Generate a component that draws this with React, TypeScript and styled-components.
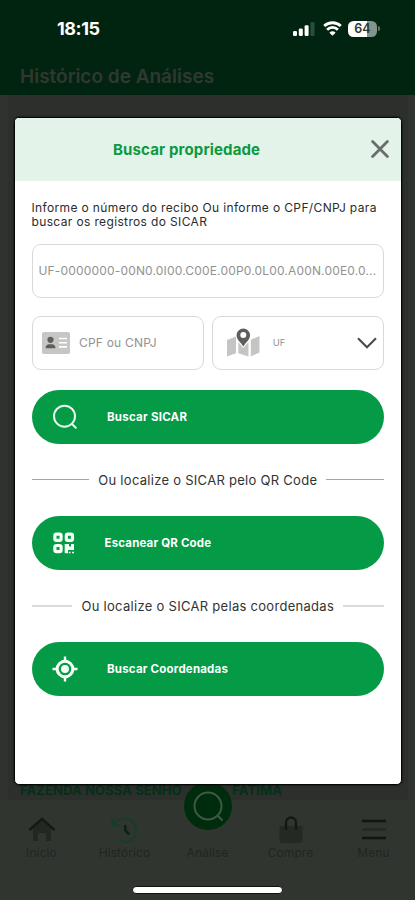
import React from "react";
import styled, { createGlobalStyle } from "styled-components";

const GlobalStyle = createGlobalStyle`
  * { box-sizing: border-box; }
  body { margin: 0; background: #303530; font-family: Inter, "Liberation Sans", sans-serif; }
`;

const Screen = styled.div`
  position: relative;
  width: 415px;
  height: 900px;
  overflow: hidden;
  display: flex;
  flex-direction: column;
  background: #2f332f;
`;

const Header = styled.header`
  height: 95px;
  flex: none;
  background: #012410;
`;

const StatusBar = styled.div`
  height: 57px;
  padding: 0 35px 0 57px;
  display: flex;
  align-items: center;
  justify-content: space-between;
`;

const Clock = styled.span`
  color: #fff;
  font-size: 18px;
  font-weight: 700;
  letter-spacing: -0.45px;
`;

const StatusIcons = styled.div`
  display: flex;
  align-items: center;
  svg { display: block; }
`;

const WifiSlot = styled.span`
  margin-left: 8px;
`;

const Battery = styled.div`
  width: 29px;
  height: 16px;
  margin-left: 6px;
  border-radius: 5.5px;
  background: linear-gradient(90deg, #fff 64%, #81958a 64%);
  color: #2c3a31;
  font-size: 12.5px;
  font-weight: 600;
  line-height: 16px;
  text-align: center;
`;

const BatteryTip = styled.i`
  width: 2px;
  height: 5px;
  margin-left: 1px;
  border-radius: 0 2px 2px 0;
  background: #62786a;
`;

const PageTitle = styled.h1`
  margin: 8px 0 0 20px;
  color: #303830;
  font-size: 19px;
  line-height: 24px;
  font-weight: 600;
  white-space: nowrap;
`;

const Content = styled.main`
  flex: 1;
  margin: 0 7px 0 8px;
  padding: 0 12px;
  display: flex;
  align-items: flex-end;
  background: #2c2f2c;
`;

const FarmName = styled.div`
  display: flex;
  justify-content: space-between;
  width: 262px;
  height: 17px;
  color: #042f18;
  font-size: 13px;
  font-weight: 700;
  line-height: 15px;
  letter-spacing: 0.1px;
  white-space: nowrap;
`;

const TabBar = styled.nav`
  position: relative;
  height: 100px;
  flex: none;
  padding-top: 16px;
  display: grid;
  grid-template-columns: repeat(5, 83px);
  background: #303530;
`;

const Tab = styled.div`
  display: flex;
  flex-direction: column;
  align-items: center;
  color: #212621;
  font-size: 12px;
  line-height: 16px;
  letter-spacing: 0.1px;
  svg { display: block; height: 28px; margin-bottom: 1px; }
`;

const TabSpacer = styled.div`
  height: 29px;
`;

const SearchFab = styled.div`
  position: absolute;
  left: 184px;
  top: -18px;
  width: 48px;
  height: 48px;
  border-radius: 50%;
  background: #002c0e;
  svg { display: block; }
`;

const HomeIndicator = styled.div`
  position: absolute;
  left: 132px;
  top: 86px;
  width: 151px;
  height: 8px;
  border-radius: 4px;
  border: 1px solid #111;
  background: #fff;
`;

const Modal = styled.section`
  position: absolute;
  left: 14px;
  top: 117px;
  width: 388px;
  height: 668px;
  border: 1px solid #050805;
  border-radius: 5px;
  overflow: hidden;
  background: #fff;
  box-shadow: 0 0 2px #000;
`;

const ModalHeader = styled.div`
  height: 62.5px;
  padding: 0 12.5px 0 98px;
  display: flex;
  align-items: center;
  justify-content: space-between;
  background: #e3f3e9;
`;

const ModalTitle = styled.h2`
  margin: 0;
  color: #0d9940;
  font-size: 15px;
  font-weight: 700;
  letter-spacing: 0.14px;
  white-space: nowrap;
`;

const ModalBody = styled.div`
  padding: 20px 17px 0 16.5px;
  display: flex;
  flex-direction: column;
`;

const Hint = styled.p`
  margin: 0 0 14px;
  color: #2c2c2c;
  font-size: 12px;
  line-height: 14.5px;
  letter-spacing: 0.36px;
  white-space: nowrap;
`;

const Field = styled.div<{ $gap?: number; $left?: number }>`
  height: 54px;
  padding: 0 6px 0 ${(p) => p.$left ?? 6}px;
  border: 1px solid #d9d9d9;
  border-radius: 9px;
  display: flex;
  align-items: center;
  gap: ${(p) => p.$gap ?? 0}px;
  svg { flex: none; }
`;

const FieldRow = styled.div`
  margin: 18px 0 20px;
  display: grid;
  grid-template-columns: 1fr 1fr;
  gap: 8px;
`;

const Placeholder = styled.span<{ $size?: number; $spacing?: number }>`
  color: #929292;
  font-size: ${(p) => p.$size ?? 12}px;
  letter-spacing: ${(p) => p.$spacing ?? 0}px;
  white-space: nowrap;
`;

const Grow = styled.span`
  flex: 1;
`;

const ActionButton = styled.button<{ $gap: number; $spacing: number }>`
  height: 54px;
  padding: 0 0 0 20.5px;
  border: 0;
  border-radius: 27px;
  display: flex;
  align-items: center;
  gap: ${(p) => p.$gap}px;
  background: #049a46;
  color: #fff;
  font: 700 11.5px/16px Inter, "Liberation Sans", sans-serif;
  letter-spacing: ${(p) => p.$spacing}px;
  white-space: nowrap;
`;

const Divider = styled.div<{ $line: string; $thickness: number; $gap: number; $spacing: number }>`
  height: 72px;
  display: flex;
  align-items: center;
  gap: ${(p) => p.$gap}px;
  color: #333;
  font-size: 13px;
  letter-spacing: ${(p) => p.$spacing}px;
  white-space: nowrap;
  &::before, &::after {
    content: "";
    flex: 1;
    height: ${(p) => p.$thickness}px;
    background: ${(p) => p.$line};
  }
`;

const Signal = () => (
  <svg width="22" height="14" viewBox="0 0 22 14" fill="#fff">
    <rect x="0" y="9" width="4" height="5" rx="1.3" />
    <rect x="5.8" y="6.5" width="4" height="7.5" rx="1.3" />
    <rect x="11.6" y="3.2" width="4" height="10.8" rx="1.3" />
    <rect x="17.5" y="0" width="4" height="14" rx="1.3" fill="#26503a" />
  </svg>
);

const Wifi = () => (
  <svg width="19" height="15" viewBox="0 0 19 15" fill="none" stroke="#fff" strokeWidth="2.8">
    <path d="M1.2 5.1a12 12 0 0 1 16.6 0" />
    <path d="M4.1 8.7a7.6 7.6 0 0 1 10.800 0" />
    <path d="M9.5 14.800 6.400 11.700a4.600 4.600 0 0 1 6.200 0z" fill="#fff" stroke="none" />
  </svg>
);

const Close = () => (
  <svg width="18" height="18" viewBox="0 0 18 18" stroke="#696e6b" strokeWidth="2.8" strokeLinecap="round">
    <path d="M1.6 1.6l14.8 14.8M16.4 1.6 1.6 16.4" />
  </svg>
);

const IdCard = () => (
  <svg width="28" height="22" viewBox="0 0 28 22">
    <rect width="28" height="22" rx="2" fill="#c6c7c5" />
    <circle cx="8.5" cy="7.8" r="3.1" fill="#5c605c" />
    <path d="M3.5 16.3c0-2.7 1.7-4.1 3.6-4.1h2.8c1.9 0 3.6 1.4 3.6 4.1z" fill="#5c605c" />
    <path d="M17 6.5h8M17 10.7h8M17 14.9h8" stroke="#fff" strokeWidth="1.6" />
  </svg>
);

const MapPin = () => (
  <svg width="33" height="29" viewBox="0 0 33 29">
    <path d="M0 12l9-3.5v16.7L0 28.5zM11.3 14l4.8 6 5.400-6v14.5l-10.2-3.3zM23.8 11.8 32.5 8v16.5l-8.7 4z" fill="#c5c6c4" />
    <path fillRule="evenodd" d="M16.3.5a6.7 6.7 0 0 1 6.7 6.7c0 4.7-4.7 7.500-6.7 11.3-2-3.8-6.7-6.6-6.7-11.3A6.7 6.7 0 0 1 16.3.5zm0 3.5a3 3 0 1 0 0 6 3 3 0 0 0 0-6z" fill="#5b5f5b" />
  </svg>
);

const Chevron = () => (
  <svg width="20" height="12" viewBox="0 0 20 12" fill="none" stroke="#494c4a" strokeWidth="2.1">
    <path d="M1 1.200l9 9 9-9" />
  </svg>
);

const SearchIcon = () => (
  <svg width="26" height="26" viewBox="0 0 26 26" fill="none" stroke="#e8fae9" strokeWidth="2">
    <circle cx="12.500" cy="12.200" r="10.500" />
    <path d="M20.500 20.500l3.300 3.200" strokeLinecap="round" />
  </svg>
);

const QrIcon = () => (
  <svg width="24" height="24" viewBox="0 0 24 24" fill="none" stroke="#f4fff5" strokeWidth="3.200">
    <rect x="2.900" y="3.100" width="6.200" height="6.200" rx="1.600" />
    <rect x="14.300" y="3.100" width="6.200" height="6.200" rx="1.600" />
    <rect x="2.900" y="14.500" width="6.200" height="6.200" rx="1.600" />
    <path d="M12.700 13h4.300v2.500h2V13h3v6h-6v3.200h-3.300z" fill="#f4fff5" stroke="none" />
    <path d="M16.800 21.500h1.700m1.500 0h2" strokeWidth="1.500" />
  </svg>
);

const TargetIcon = () => (
  <svg width="26" height="26" viewBox="0 0 26 26" fill="none" stroke="#f5fff6">
    <circle cx="13" cy="13" r="7.800" strokeWidth="3" />
    <circle cx="13" cy="13" r="4" fill="#f5fff6" stroke="none" />
    <path d="M11.800.5h2.400v3l3 2.500H8.800l3-2.500zM11.800 25.500h2.400v-3l3-2.500H8.800l3 2.500zM.5 11.800v2.400h3L6 17.200V8.800l-2.500 3zM25.500 11.800v2.400h-3L20 17.200V8.800l2.500 3z" fill="#f5fff6" stroke="none" />
  </svg>
);

const HomeIcon = () => (
  <svg width="30" height="28" viewBox="0 0 30 28" fill="none">
    <path d="M6 13l9-8 9 8v12h-5v-6q0-2-2-2h-4q-2 0-2 2v6H6z" fill="#222722" />
    <path d="M2.500 14 15 3l12.500 11" stroke="#131914" strokeWidth="2.500" />
  </svg>
);

const HistoryIcon = () => (
  <svg width="28" height="28" viewBox="0 0 28 28" fill="none">
    <path d="M3 8.500C6 4 10.500 2 15 2.500A12 12 0 0 1 16 26c-3.300.3-6-1-8-3" stroke="#163d28" strokeWidth="2" />
    <path d="M1.500 2.500v7h7" stroke="#163d28" strokeWidth="2.300" />
    <path d="M14.300 9v5.500l4 3.800" stroke="#042414" strokeWidth="2.500" />
  </svg>
);

const BagIcon = () => (
  <svg width="26" height="28" viewBox="0 0 26 28" fill="none">
    <path d="M1.500 10h23v14q0 3-3 3h-17q-3 0-3-3z" fill="#242924" />
    <path d="M8 14V6.500a5 5 0 0 1 10 0V14" stroke="#141814" strokeWidth="2.300" />
  </svg>
);

const MenuIcon = () => (
  <svg width="26" height="28" viewBox="0 0 26 28" strokeWidth="2.500">
    <path d="M1 5h24M1 22h24" stroke="#111612" />
    <path d="M1 13.500h24" stroke="#242a25" />
  </svg>
);

const FabIcon = () => (
  <svg width="48" height="48" viewBox="0 0 48 48" fill="none" stroke="#405744" strokeWidth="2">
    <circle cx="24" cy="24" r="13.500" />
    <path d="M34 34l4 4" strokeLinecap="round" />
  </svg>
);

export default function App() {
  return (
    <Screen>
      <GlobalStyle />
      <Header>
        <StatusBar>
          <Clock>18:15</Clock>
          <StatusIcons>
            <Signal />
            <WifiSlot><Wifi /></WifiSlot>
            <Battery>64</Battery>
            <BatteryTip />
          </StatusIcons>
        </StatusBar>
        <PageTitle>Histórico de Análises</PageTitle>
      </Header>
      <Content>
        <FarmName><span>FAZENDA NOSSA SENHO</span><span>FATIMA</span></FarmName>
      </Content>
      <TabBar>
        <Tab><HomeIcon />Início</Tab>
        <Tab><HistoryIcon />Histórico</Tab>
        <Tab><TabSpacer />Análise</Tab>
        <Tab><BagIcon />Compre</Tab>
        <Tab><MenuIcon />Menu</Tab>
        <SearchFab><FabIcon /></SearchFab>
        <HomeIndicator />
      </TabBar>
      <Modal>
        <ModalHeader>
          <ModalTitle>Buscar propriedade</ModalTitle>
          <Close />
        </ModalHeader>
        <ModalBody>
          <Hint>
            Informe o número do recibo Ou informe o CPF/CNPJ para<br />
            buscar os registros do SICAR
          </Hint>
          <Field>
            <Placeholder $spacing={0.17}>UF-0000000-00N0.0I00.C00E.00P0.0L00.A00N.00E0.0...</Placeholder>
          </Field>
          <FieldRow>
            <Field $left={9.5} $gap={9}>
              <IdCard />
              <Placeholder $spacing={0.2}>CPF ou CNPJ</Placeholder>
            </Field>
            <Field $left={14} $gap={13}>
              <MapPin />
              <Placeholder $size={9.5}>UF</Placeholder>
              <Grow />
              <Chevron />
            </Field>
          </FieldRow>
          <ActionButton $gap={29} $spacing={0.25}><SearchIcon />Buscar SICAR</ActionButton>
          <Divider $line="#a4a4a4" $thickness={1} $gap={9} $spacing={0.28}>Ou localize o SICAR pelo QR Code</Divider>
          <ActionButton $gap={28.5} $spacing={0.17}><QrIcon />Escanear QR Code</ActionButton>
          <Divider $line="#dadada" $thickness={2} $gap={9} $spacing={0.29}>Ou localize o SICAR pelas coordenadas</Divider>
          <ActionButton $gap={29} $spacing={0.2}><TargetIcon />Buscar Coordenadas</ActionButton>
        </ModalBody>
      </Modal>
    </Screen>
  );
}
